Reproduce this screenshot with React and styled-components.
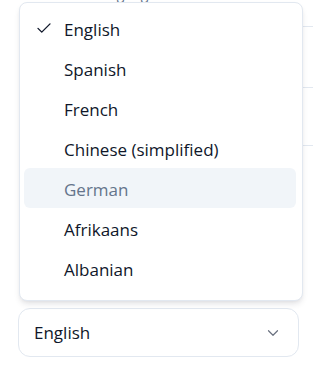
import React from "react";
import styled, { createGlobalStyle } from "styled-components";

const GlobalStyle = createGlobalStyle`
  html, body {
    margin: 0;
    padding: 0;
    background: #ffffff;
    font-family: "Open Sans", "Noto Sans", sans-serif;
    color: #0f172a;
  }
`;

const Page = styled.div`
  position: relative;
  width: 313px;
  height: 369px;
  overflow: hidden;
`;

const Backdrop = styled.div`
  display: flex;
  flex-direction: column;
`;

const Caption = styled.div`
  margin-top: -14px;
  padding-left: 35px;
  font-size: 14px;
  line-height: 16px;
  color: #64748b;
`;

const Row = styled.div`
  height: ${(p) => p.h}px;
  margin-left: 40px;
  border-bottom: 1px solid #e2e8f0;
  box-sizing: border-box;
`;

const Trigger = styled.button`
  display: flex;
  align-items: center;
  justify-content: space-between;
  box-sizing: border-box;
  width: 281px;
  height: 49px;
  margin: 162px 0 0 18px;
  padding: 0 16px 0 15px;
  background: #ffffff;
  border: 1px solid #e2e8f0;
  border-radius: 12px;
  font: inherit;
  font-size: 17px;
  color: #0f172a;
`;

const Menu = styled.ul`
  position: absolute;
  top: 2px;
  left: 19px;
  box-sizing: border-box;
  width: 284px;
  height: 299px;
  margin: 0;
  padding: 5px 6px 0 4px;
  list-style: none;
  background: #ffffff;
  border: 1px solid #e2e8f0;
  border-radius: 8px;
  box-shadow: 0 4px 6px -1px rgba(15, 23, 42, 0.1), 0 2px 4px -2px rgba(15, 23, 42, 0.08);
`;

const Item = styled.li`
  position: relative;
  display: flex;
  align-items: center;
  height: 40px;
  padding-left: 40px;
  padding-top: 2px;
  box-sizing: border-box;
  border-radius: 6px;
  font-size: 17px;
  color: ${(p) => (p.active ? "#64748b" : "#0f172a")};
  background: ${(p) => (p.active ? "#f1f5f9" : "transparent")};
`;

const Check = styled.svg`
  position: absolute;
  left: 11px;
  top: 11px;
`;

const languages = ["English", "Spanish", "French", "Chinese (simplified)", "German", "Afrikaans", "Albanian"];

export default function App() {
  return (
    <Page>
      <GlobalStyle />
      <Backdrop>
        <Caption>Interface language</Caption>
        <Row h={25} />
        <Row h={61} />
        <Row h={58} />
        <Trigger>
          English
          <svg width="18" height="18" viewBox="0 0 24 24" fill="none" stroke="#6b7280" strokeWidth="1.6" strokeLinecap="round" strokeLinejoin="round">
            <path d="M6 9l6 6 6-6" />
          </svg>
        </Trigger>
      </Backdrop>
      <Menu>
        {languages.map((lang) => (
          <Item key={lang} active={lang === "German"}>
            {lang === "English" && (
              <Check width="18" height="18" viewBox="0 0 24 24" fill="none" stroke="#0f172a" strokeWidth="1.8" strokeLinecap="round" strokeLinejoin="round">
                <path d="M4 12.5l5 5L20 6.5" />
              </Check>
            )}
            {lang}
          </Item>
        ))}
      </Menu>
    </Page>
  );
}
